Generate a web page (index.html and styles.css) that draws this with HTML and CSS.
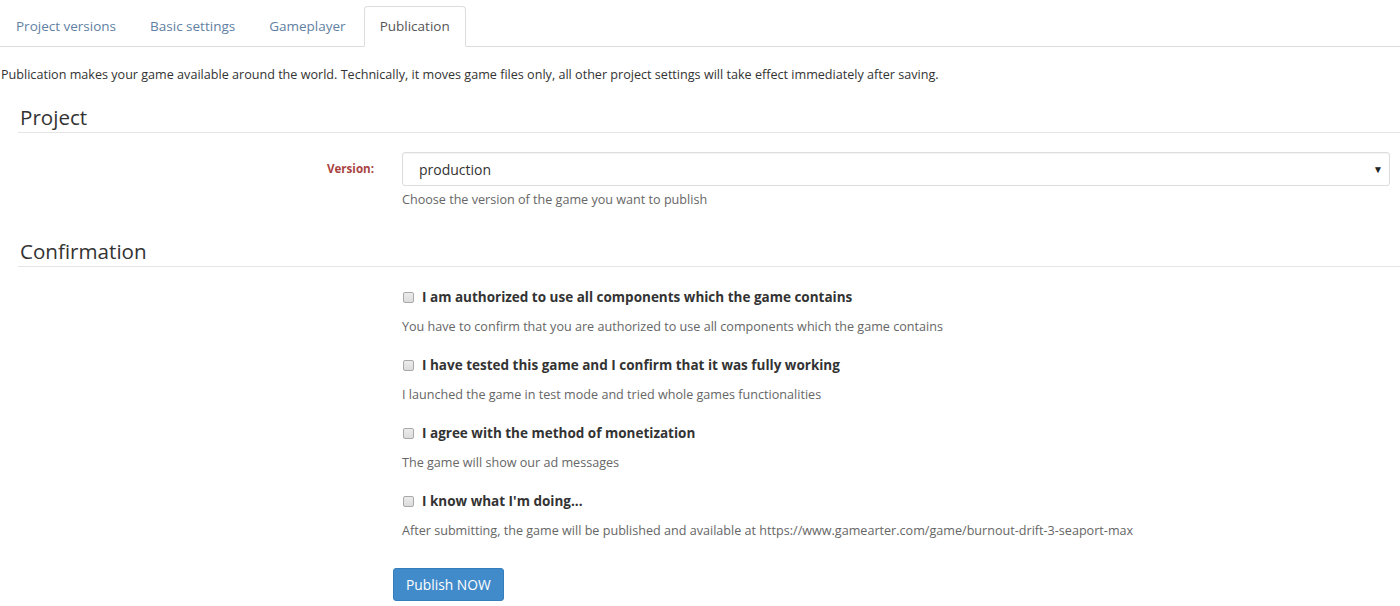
FILE: index.html
```html
<!DOCTYPE html>
<html>
<head>
<meta charset="utf-8">
<link rel="stylesheet" href="styles.css">
</head>
<body>
<div class="page">
  <ul class="tabs">
    <li class="tab">Project versions</li>
    <li class="tab">Basic settings</li>
    <li class="tab">Gameplayer</li>
    <li class="tab active">Publication</li>
  </ul>
  <p class="intro">Publication makes your game available around the world. Technically, it moves game files only, all other project settings will take effect immediately after saving.</p>

  <h2 class="section">Project</h2>
  <div class="row">
    <label class="label">Version:</label>
    <div class="control">
      <div class="select"><span>production</span><span class="caret">&#9660;</span></div>
      <p class="help">Choose the version of the game you want to publish</p>
    </div>
  </div>

  <h2 class="section second">Confirmation</h2>
  <div class="row">
    <div></div>
    <div class="control checks">
      <div class="check">
        <label class="check-label"><span class="box"></span>I am authorized to use all components which the game contains</label>
        <p class="help">You have to confirm that you are authorized to use all components which the game contains</p>
      </div>
      <div class="check">
        <label class="check-label"><span class="box"></span>I have tested this game and I confirm that it was fully working</label>
        <p class="help">I launched the game in test mode and tried whole games functionalities</p>
      </div>
      <div class="check">
        <label class="check-label"><span class="box"></span>I agree with the method of monetization</label>
        <p class="help">The game will show our ad messages</p>
      </div>
      <div class="check">
        <label class="check-label"><span class="box"></span>I know what I'm doing...</label>
        <p class="help">After submitting, the game will be published and available at https://www.gamearter.com/game/burnout-drift-3-seaport-max</p>
      </div>
      <button class="btn">Publish NOW</button>
    </div>
  </div>
</div>
</body>
</html>
```
FILE: styles.css
```css
* { box-sizing: border-box; }
html, body { margin: 0; padding: 0; background: #fff; }
body {
  font-family: "Open Sans", "Liberation Sans", sans-serif;
  color: #333;
  font-size: 14px;
}
.page { padding-top: 6px; }
.tabs {
  list-style: none;
  margin: 0;
  padding: 0;
  display: flex;
  border-bottom: 1px solid #ddd;
}
.tab {
  margin-bottom: -1px;
  margin-right: 2px;
  padding: 10px 15px;
  line-height: 19px;
  font-size: 13.5px;
  color: #5f7fa3;
  border: 1px solid transparent;
  border-radius: 4px 4px 0 0;
}
.tab.active {
  color: #555;
  background: #fff;
  border-color: #ddd #ddd transparent;
}
.intro {
  margin: 18px 0 0 1px;
  font-size: 12.6px;
  line-height: 20px;
  color: #333;
}
.section {
  margin: 17px 0 0 18px;
  padding: 0 0 0 2px;
  font-size: 20.6px;
  font-weight: 400;
  line-height: 30px;
  color: #333;
  border-bottom: 1px solid #e5e5e5;
}
.section.second { margin-top: 27px; }
.row {
  display: grid;
  grid-template-columns: 402px 1fr;
  margin-top: 19px;
}
.label {
  text-align: right;
  padding-right: 28px;
  padding-top: 8px;
  font-size: 11.6px;
  font-weight: 700;
  line-height: 18px;
  color: #a94442;
}
.control { padding-right: 10px; }
.select {
  display: flex;
  justify-content: space-between;
  align-items: center;
  height: 34px;
  padding: 0 6px 0 16px;
  border: 1px solid #ddd;
  border-radius: 3px;
  font-size: 14px;
  color: #333;
  box-shadow: inset 0 1px 1px rgba(0,0,0,.05);
}
.caret { font-size: 10px; color: #222; }
.help {
  margin: 5px 0 0;
  font-size: 12.6px;
  line-height: 18px;
  color: #666;
}
.checks { padding-top: 1px; }
.check { margin-bottom: 19px; }
.check-label {
  display: flex;
  align-items: center;
  height: 20px;
  font-size: 13.5px;
  font-weight: 700;
  color: #333;
}
.box {
  width: 11px;
  height: 11px;
  margin: 0 8px 0 1px;
  border: 1px solid #a8a8a8;
  border-radius: 2px;
  background: linear-gradient(#ececec, #dcdcdc);
}
.check .help { margin-top: 11px; }
.btn {
  margin: 9px 0 0 -9px;
  height: 33px;
  padding: 0 12px;
  font-family: inherit;
  font-size: 13.8px;
  color: #fff;
  background: #428bca;
  border: 1px solid #357ebd;
  border-radius: 3px;
}
```
